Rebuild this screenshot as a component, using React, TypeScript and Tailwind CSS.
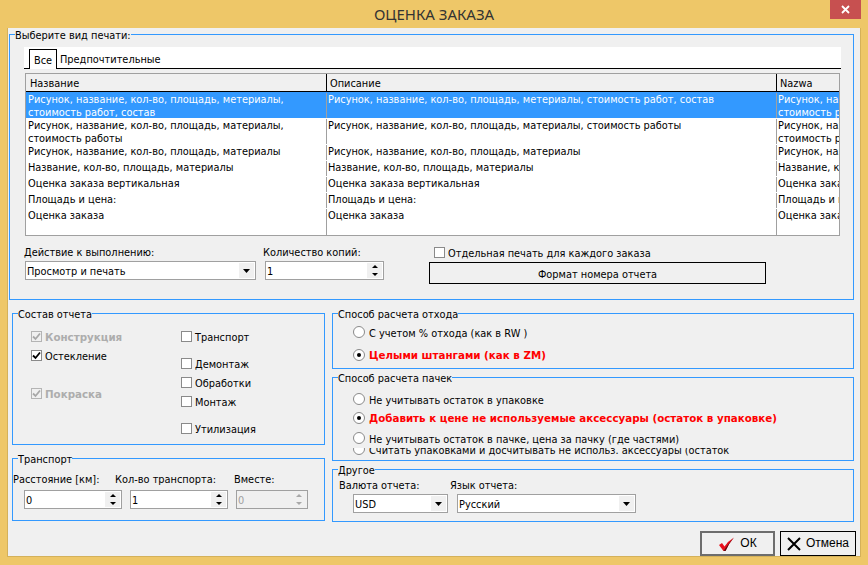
import type { ReactNode } from 'react';

const rows = [
    { name: 'Рисунок, название, кол-во, площадь, метериалы,\nстоимость работ, состав', desc: 'Рисунок, название, кол-во, площадь, метериалы, стоимость работ, состав', h: 'h-[26px]', selected: true },
    { name: 'Рисунок, название, кол-во, площадь, материалы,\nстоимость работы', desc: 'Рисунок, название, кол-во, площадь, материалы, стоимость работы', h: 'h-[26px]' },
    { name: 'Рисунок, название, кол-во, площадь, материалы', desc: 'Рисунок, название, кол-во, площадь, материалы', h: 'h-[16px]' },
    { name: 'Название, кол-во, площадь, материалы', desc: 'Название, кол-во, площадь, материалы', h: 'h-[16px]' },
    { name: 'Оценка заказа вертикальная', desc: 'Оценка заказа вертикальная', h: 'h-[16px]' },
    { name: 'Площадь и цена:', desc: 'Площадь и цена:', h: 'h-[16px]' },
    { name: 'Оценка заказа', desc: 'Оценка заказа', h: 'h-[16px]' },
];

function Group({ title, className, children }: { title: string; className: string; children: ReactNode }) {
    return (
        <fieldset className={`border border-[#3399ff] ${className}`}>
            <legend className="ml-[5px] h-[13px] leading-[15px]">{title}</legend>
            {children}
        </fieldset>
    );
}

function Check({ label, checked, disabled, className }: { label: string; checked?: boolean; disabled?: boolean; className?: string }) {
    return (
        <div className={`flex items-center h-[14px] ${className ?? ''}`}>
            <span className={`w-[11px] h-[11px] border flex items-center justify-center ${disabled ? 'border-[#b4b4b4] bg-[#f0f0f0]' : 'border-[#8a8a8a] bg-white'}`}>
                {checked && (
                    <svg width="9" height="9" viewBox="0 0 9 9">
                        <path d="M1 4.5 L3.5 7 L8 1.5" fill="none" stroke={disabled ? '#a8a8a8' : '#000'} strokeWidth="1.8" />
                    </svg>
                )}
            </span>
            <span className={`ml-[3px] pt-[2px] ${disabled ? 'font-bold text-[10.3px] text-[#adadad]' : ''}`}>{label}</span>
        </div>
    );
}

function Radio({ label, checked, red, className }: { label: string; checked?: boolean; red?: boolean; className?: string }) {
    return (
        <div className={`flex items-center h-[14px] ${className ?? ''}`}>
            <span className="w-[12px] h-[12px] rounded-full border border-[#8a8a8a] bg-white flex items-center justify-center">
                {checked && <span className="w-[4px] h-[4px] rounded-full bg-black" />}
            </span>
            <span className={`ml-[4px] whitespace-nowrap ${red ? 'font-bold text-[10.3px] text-[#ff0000]' : 'pt-[2px]'}`}>{label}</span>
        </div>
    );
}

function Tri({ up, color = '#000', w = 8, h = 4 }: { up?: boolean; color?: string; w?: number; h?: number }) {
    return (
        <svg width={w} height={h} viewBox={`0 0 ${w} ${h}`}>
            <path d={up ? `M0 ${h} L${w / 2} 0 L${w} ${h} Z` : `M0 0 L${w} 0 L${w / 2} ${h} Z`} fill={color} />
        </svg>
    );
}

function Spin({ value, className, disabled }: { value: string; className: string; disabled?: boolean }) {
    const arrow = disabled ? '#a8a8a8' : '#000';
    return (
        <div className={`h-[19px] border flex items-center justify-between border-[#a0a0a0] ${disabled ? 'bg-[#f0f0f0] text-[#a0a0a0]' : 'bg-white'} ${className}`}>
            <span className="pl-[1px] pt-[2px]">{value}</span>
            <span className={`w-[15px] h-[15px] mr-[1px] flex flex-col gap-[1px] ${disabled ? '' : 'bg-[#f0f0f0]'}`}>
                <span className="flex-1 flex items-center justify-center"><Tri up color={arrow} w={6} h={3} /></span>
                <span className="flex-1 flex items-center justify-center"><Tri color={arrow} w={6} h={3} /></span>
            </span>
        </div>
    );
}

function Combo({ value, className }: { value: string; className: string }) {
    return (
        <div className={`h-[19px] border border-[#a0a0a0] bg-white flex items-center justify-between ${className}`}>
            <span className="pl-[1px] pt-[2px]">{value}</span>
            <span className="w-[15px] h-[15px] mr-[1px] bg-[#f0f0f0] flex items-center justify-center"><Tri w={7} h={4} /></span>
        </div>
    );
}

export default function App() {
    return (
        <div className='w-[868px] h-[565px] bg-[#eec768] flex flex-col overflow-hidden text-[9.8px] leading-[13px] text-black font-["DejaVu_Sans",sans-serif]'>
            {/* Title bar */}
            <div className="h-[28px] shrink-0 flex items-start relative px-[7px]">
                <div className='flex-1 text-center text-[15px] leading-[28px] text-[#333] font-["Noto_Sans",sans-serif]'>ОЦЕНКА ЗАКАЗА</div>
                <div className="absolute right-[7px] top-0 w-[31px] h-[19px] bg-[#c75050] flex items-center justify-center">
                    <svg width="9" height="9" viewBox="0 0 9 9">
                        <path d="M1 1 L8 8 M8 1 L1 8" stroke="#fff" strokeWidth="1.8" />
                    </svg>
                </div>
            </div>

            {/* Client area */}
            <div className="mx-[7px] h-[529px] shrink-0 bg-[#f0f0f0] border border-t-0 border-[#d4b15a] pl-[1px]">
                <Group title="Выберите вид печати:" className="w-[845px] h-[272px]">
                    <div className="pl-[14px]">
                        {/* Tabs */}
                        <div className="mt-[6px] w-[817px] h-[22px] bg-white border-b border-black flex items-end pl-[5px]">
                            <div className="w-[28px] h-[20px] pt-[2px] border border-b-0 border-black flex items-center justify-center -mb-px bg-white">Все</div>
                            <div className="ml-[3px] h-[19px] pt-[2px] flex items-center">Предпочтительные</div>
                        </div>

                        {/* Grid */}
                        <div className="mt-[4px] w-[815px] ml-px h-[163px] bg-white border border-[#a0a0a0] flex flex-col overflow-hidden">
                            <div className="h-[18px] shrink-0 flex bg-[#f0f0f0] border-b border-black leading-[20px]">
                                <div className="w-[301px] pl-[4px] border-r border-black">Название</div>
                                <div className="w-[450px] pl-[3px] border-r border-black">Описание</div>
                                <div className="flex-1 pl-[3px]">Nazwa</div>
                            </div>
                            {rows.map((r) => (
                                <div key={r.name} className={`${r.h} shrink-0 flex pt-px ${r.selected ? 'bg-[#3399ff] text-white' : ''}`}>
                                    <div className="w-[301px] pl-[2px] border-r border-[#a0a0a0] whitespace-pre-line overflow-hidden">{r.name}</div>
                                    <div className="w-[450px] pl-[1px] border-r border-[#a0a0a0] whitespace-nowrap overflow-hidden">{r.desc}</div>
                                    <div className="flex-1 pl-[1px] whitespace-pre overflow-hidden">{r.name}</div>
                                </div>
                            ))}
                            <div className="flex-1 flex">
                                <div className="w-[301px] border-r border-[#a0a0a0]" />
                                <div className="w-[450px] border-r border-[#a0a0a0]" />
                            </div>
                        </div>

                        {/* Print options */}
                        <div className="flex mt-[9px]">
                            <div className="w-[239px]">
                                <div className="h-[13px] leading-[15px]">Действие к выполнению:</div>
                                <Combo value="Просмотр и печать" className="mt-[3px] ml-px w-[231px]" />
                            </div>
                            <div className="w-[166px]">
                                <div className="h-[13px] leading-[15px]">Количество копий:</div>
                                <Spin value="1" className="mt-[3px] ml-[2px] w-[119px]" />
                            </div>
                            <div className="flex flex-col">
                                <Check label="Отдельная печать для каждого заказа" className="ml-[5px]" />
                                <div className="mt-[3px] pt-[2px] w-[337px] h-[22px] border border-black flex items-center justify-center">Формат номера отчета</div>
                            </div>
                        </div>
                    </div>
                </Group>

                <div className="flex mt-[7px] pl-[3px]">
                    {/* Left column */}
                    <div className="w-[313px]">
                        <Group title="Состав отчета" className="h-[138px]">
                            <div className="flex pl-[18px] pt-[9px]">
                                <div className="w-[150px]">
                                    <Check label="Конструкция" checked disabled />
                                    <Check label="Остекление" checked className="mt-[5px]" />
                                    <Check label="Покраска" checked disabled className="mt-[24px]" />
                                </div>
                                <div>
                                    <Check label="Транспорт" />
                                    <Check label="Демонтаж" className="mt-[13px]" />
                                    <Check label="Обработки" className="mt-[5px]" />
                                    <Check label="Монтаж" className="mt-[5px]" />
                                    <Check label="Утилизация" className="mt-[13px]" />
                                </div>
                            </div>
                        </Group>
                        <Group title="Транспорт" className="mt-[7px] h-[69px]">
                            <div className="flex mt-[7px] h-[13px] leading-[15px]">
                                <span className="w-[102px]">Расстояние [км]:</span>
                                <span className="w-[119px]">Кол-во транспорта:</span>
                                <span>Вместе:</span>
                            </div>
                            <div className="flex mt-[5px] pl-[11px]">
                                <Spin value="0" className="w-[98px]" />
                                <Spin value="1" className="ml-[8px] w-[98px]" />
                                <Spin value="0" disabled className="ml-[8px] w-[72px]" />
                            </div>
                        </Group>
                    </div>

                    {/* Right column */}
                    <div className="ml-[7px] w-[522px]">
                        <Group title="Способ расчета отхода" className="h-[62px]">
                            <div className="pl-[20px]">
                                <Radio label="С учетом % отхода (как в RW )" className="mt-[5px]" />
                                <Radio label="Целыми штангами (как в ZM)" checked red className="mt-[9px]" />
                            </div>
                        </Group>
                        <Group title="Способ расчета пачек" className="mt-[2px] h-[90px]">
                            <div className="pl-[20px]">
                                <Radio label="Не учитывать остаток в упаковке" className="mt-[8px]" />
                                <Radio label="Добавить к цене не используемые аксессуары (остаток в упаковке)" checked red className="mt-[5px]" />
                                <Radio label="Не учитывать остаток в пачке, цена за пачку (где частями)" className="mt-[6px]" />
                                {/* last row is overlapped by the one above in the original */}
                                <div className="mt-[3px] h-[9px] overflow-hidden">
                                    <Radio label="Считать упаковками и досчитывать не использ. аксессуары (остаток" className="-mt-[6px]" />
                                </div>
                            </div>
                        </Group>
                        <Group title="Другое" className="mt-[2px] h-[59px]">
                            <div className="pl-[6px]">
                                <div className="flex h-[13px] mt-[2px] leading-[15px]">
                                    <span className="w-[111px]">Валюта отчета:</span>
                                    <span>Язык отчета:</span>
                                </div>
                                <div className="flex mt-[3px] pl-[14px]">
                                    <Combo value="USD" className="w-[95px]" />
                                    <Combo value="Русский" className="ml-[9px] w-[179px]" />
                                </div>
                            </div>
                        </Group>
                    </div>
                </div>

                {/* Dialog buttons */}
                <div className='flex justify-end gap-[5px] mt-[9px] pr-[4px] text-[12px] font-["Liberation_Sans",sans-serif]'>
                    <div className="w-[75px] h-[25px] border-2 border-[#6d6d6d] flex items-center justify-center gap-[5px]">
                        <svg width="17" height="16" viewBox="0 0 17 16">
                            <path d="M1 9 L4 7 L6.5 10.5 Q10 5 16 1.5 Q11 7 7.5 15 L5.5 15 Z" fill="#e8101c" />
                            <path d="M5.5 15 L7.5 15 Q11 7 16 1.5 Q11.5 6 7 13 Z" fill="#5a0a0e" />
                        </svg>
                        <span>ОК</span>
                    </div>
                    <div className="w-[76px] h-[25px] border border-black flex items-center justify-center gap-[5px]">
                        <svg width="14" height="14" viewBox="0 0 14 14">
                            <path d="M1 1 L13 13 M13 1 L1 13" stroke="#000" strokeWidth="2" />
                        </svg>
                        <span>Отмена</span>
                    </div>
                </div>
            </div>
        </div>
    );
}
